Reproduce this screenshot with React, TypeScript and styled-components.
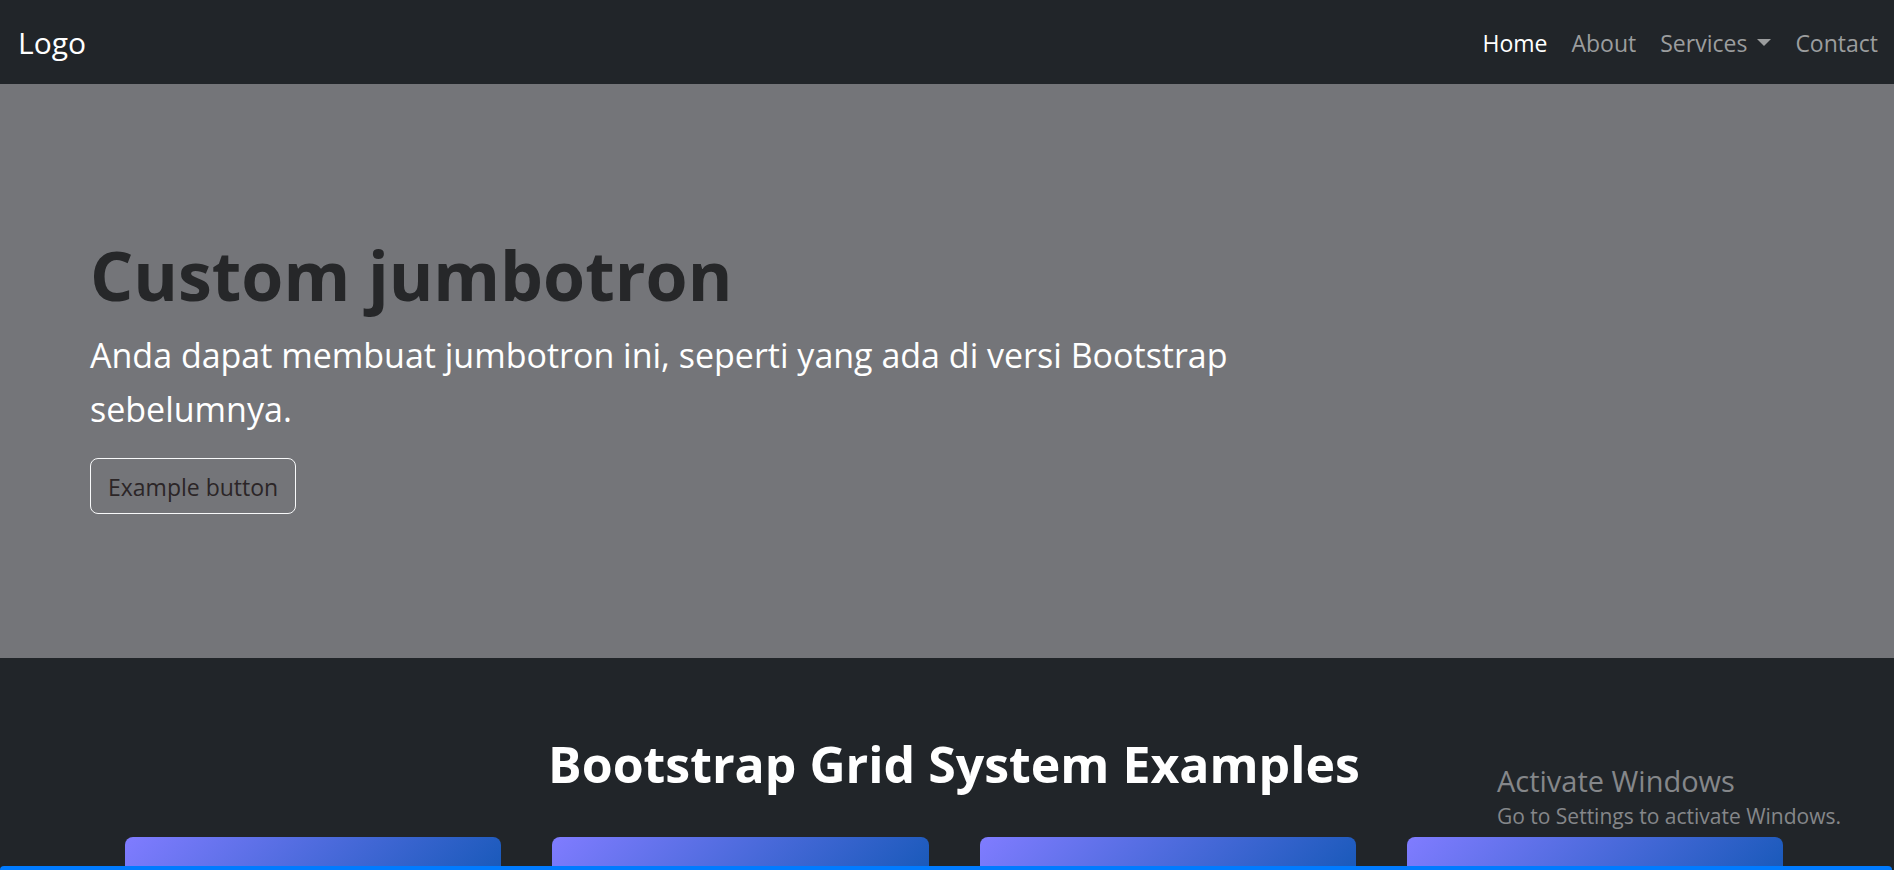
import React from 'react';
import styled, { createGlobalStyle } from 'styled-components';

const GlobalStyle = createGlobalStyle`
  *, *::before, *::after { box-sizing: border-box; }
  body {
    margin: 0;
    background: #212529;
    color: #fff;
    font-family: "Segoe UI", "Open Sans", "Noto Sans", sans-serif;
  }
`;

const Page = styled.div`
  position: relative;
  height: 100vh;
  overflow: hidden;
`;

const Navbar = styled.nav`
  display: flex;
  align-items: center;
  justify-content: space-between;
  min-height: 84px;
  padding: 2px 16px 0 18px;
`;

const Brand = styled.a`
  color: #fff;
  font-size: 30px;
  line-height: 44px;
  text-decoration: none;
`;

const NavList = styled.ul`
  display: flex;
  gap: 24px;
  margin: 0;
  padding: 0;
  list-style: none;
`;

const NavLink = styled.a<{ $active?: boolean }>`
  display: flex;
  align-items: center;
  color: ${({ $active }) => ($active ? '#fff' : '#9b9d9e')};
  font-size: 23px;
  line-height: 36px;
  text-decoration: none;
`;

const Caret = styled.span`
  margin: 0 0 2px 10px;
  border-top: 7px solid currentColor;
  border-left: 7px solid transparent;
  border-right: 7px solid transparent;
`;

const Hero = styled.header`
  padding: 148px 90px 144px;
  background: #747579;
`;

const HeroTitle = styled.h1`
  margin: 0 0 10px;
  color: #262729;
  font-size: 68px;
  font-weight: 700;
  line-height: 86px;
`;

const Lead = styled.p`
  max-width: 68%;
  margin: 0 0 22px;
  font-size: 34px;
  line-height: 54px;
`;

const OutlineButton = styled.button`
  display: block;
  padding: 10px 17px 8px;
  border: 1px solid #f8f9fa;
  border-radius: 8px;
  background: transparent;
  color: #2b2527;
  font-family: inherit;
  font-size: 23px;
  line-height: 36px;
`;

const GridSection = styled.section`
  padding: 77px 111px 0 125px;
`;

const SectionTitle = styled.h2`
  margin: 0 0 44px;
  font-size: 50px;
  font-weight: 700;
  line-height: 58px;
  text-align: center;
`;

const CardGrid = styled.div`
  display: grid;
  grid-template-columns: repeat(4, 1fr);
  gap: 51px;
`;

const Card = styled.article`
  min-height: 74px;
  border-radius: 8px;
  background: linear-gradient(135deg, #807cff, #0f56b3);
`;

const BottomBar = styled.div`
  position: absolute;
  right: 2px;
  bottom: 0;
  left: 0;
  height: 4px;
  border-radius: 4px 4px 0 0;
  background: #007bff;
`;

const Watermark = styled.aside`
  position: absolute;
  right: 53px;
  bottom: 39px;
  color: #85878a;
`;

const WatermarkTitle = styled.div`
  font-size: 29px;
  line-height: 40px;
`;

const WatermarkText = styled.div`
  font-size: 21px;
  line-height: 30px;
`;

const links = [
  { label: 'Home', active: true },
  { label: 'About' },
  { label: 'Services', menu: true },
  { label: 'Contact' },
];

const cards = [1, 2, 3, 4];

export default function App() {
  return (
    <Page>
      <GlobalStyle />
      <Navbar>
        <Brand href="#">Logo</Brand>
        <NavList>
          {links.map(({ label, active, menu }) => (
            <li key={label}>
              <NavLink href="#" $active={active}>
                {label}
                {menu && <Caret />}
              </NavLink>
            </li>
          ))}
        </NavList>
      </Navbar>
      <Hero>
        <HeroTitle>Custom jumbotron</HeroTitle>
        <Lead>Anda dapat membuat jumbotron ini, seperti yang ada di versi Bootstrap sebelumnya.</Lead>
        <OutlineButton type="button">Example button</OutlineButton>
      </Hero>
      <GridSection>
        <SectionTitle>Bootstrap Grid System Examples</SectionTitle>
        <CardGrid>
          {cards.map((id) => (
            <Card key={id} />
          ))}
        </CardGrid>
      </GridSection>
      <Watermark>
        <WatermarkTitle>Activate Windows</WatermarkTitle>
        <WatermarkText>Go to Settings to activate Windows.</WatermarkText>
      </Watermark>
      <BottomBar />
    </Page>
  );
}
